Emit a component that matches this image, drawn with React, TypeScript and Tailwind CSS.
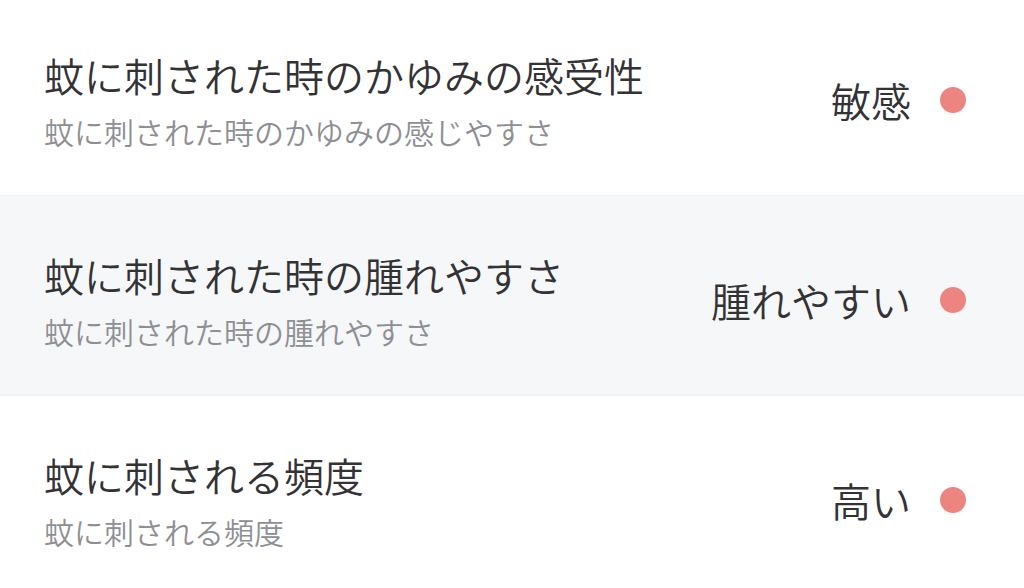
import React from 'react';

type Item = {
  title: string;
  sub: string;
  value: string;
  shaded?: boolean;
};

const items: Item[] = [
  {
    title: '蚊に刺された時のかゆみの感受性',
    sub: '蚊に刺された時のかゆみの感じやすさ',
    value: '敏感',
  },
  {
    title: '蚊に刺された時の腫れやすさ',
    sub: '蚊に刺された時の腫れやすさ',
    value: '腫れやすい',
    shaded: true,
  },
  {
    title: '蚊に刺される頻度',
    sub: '蚊に刺される頻度',
    value: '高い',
  },
];

export default function App() {
  return (
    <div
      className="w-[1024px] h-[588px] overflow-hidden bg-white"
      style={{ fontFamily: '"Noto Sans CJK JP", "Noto Sans", sans-serif' }}
    >
      <div className="-mt-[4px]">
        {items.map((item) => (
          <div
            key={item.title}
            className={`h-[200px] flex items-center pt-[8px] pl-[44px] pr-[58px] border-b border-[#eff0f2] ${
              item.shaded ? 'bg-[#f6f7f9]' : 'bg-white'
            }`}
          >
            <div className="flex-1 flex flex-col">
              <div className="text-[40px] leading-[56px] font-[350] text-[#333336]">{item.title}</div>
              <div className="mt-[7px] text-[30px] leading-[42px] font-[350] text-[#8e8f94]">{item.sub}</div>
            </div>
            <div className="flex items-center gap-[29px]">
              <span className="text-[40px] leading-[56px] font-[350] text-[#333336]">{item.value}</span>
              <span className="w-[26px] h-[26px] rounded-full bg-[#ec8580]" />
            </div>
          </div>
        ))}
      </div>
    </div>
  );
}
